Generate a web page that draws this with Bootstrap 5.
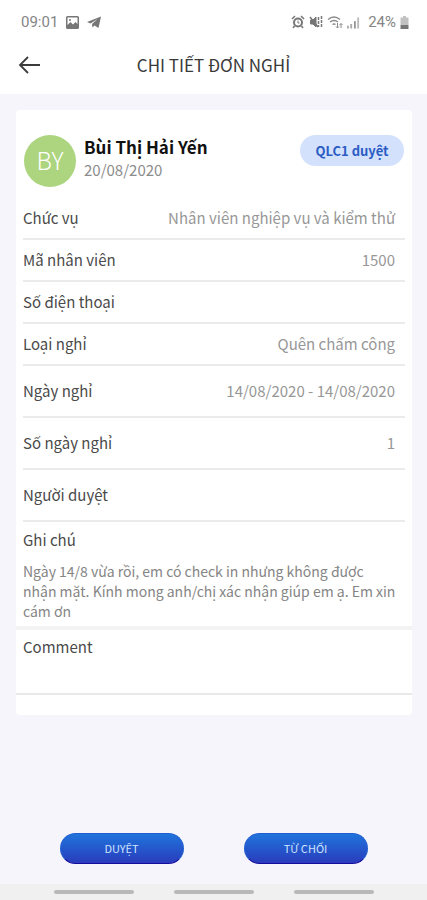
<!DOCTYPE html>
<html lang="vi">
<head>
<meta charset="utf-8">
<meta name="viewport" content="width=device-width, initial-scale=1">
<title>Chi tiết đơn nghỉ</title>
<link href="https://cdn.jsdelivr.net/npm/bootstrap@5.3.0/dist/css/bootstrap.min.css" rel="stylesheet">
<style>
body { font-family: "Noto Sans CJK SC", "Noto Sans", sans-serif; background: #f5f5fb; color: #4a4a4a; font-size: 15px; line-height: 20px; }
.status-bar { height: 42px; padding: 2px 18px 0 21px; color: #858585; font-family: Roboto, sans-serif; font-size: 15px; }
.title-bar { height: 52px; padding: 0 18px 6px; display: grid; grid-template-columns: 24px 1fr 24px; align-items: center; }
.title-bar h1 { font-size: 17px; line-height: 24px; color: #3a3a3a; }
.back-btn { width: 24px; height: 24px; line-height: 0; }
.sheet { margin: 16px 15px 0 16px; border-radius: 4px; padding-bottom: 20px; }
.person { padding: 25px 8px 10px; height: 88px; }
.initials { width: 52px; height: 52px; background: #add57f; font-size: 24px; font-weight: 300; padding-bottom: 2px; }
.person-name { font-size: 17px; line-height: 24px; color: #111; }
.person-date { font-size: 15px; line-height: 22px; color: #8c8c8c; }
.state-pill { width: 104px; height: 31px; background: #d3e1fc; color: #2a5cc4; font-size: 13px; }
.field { margin: 0 7px; height: 42px; border-bottom: 2px solid #ebebeb; padding-right: 10px; }
.field-tall { height: 52px; }
.field dt { font-weight: 400; }
.field dd { color: #979797; }
.note { margin: 0 7px; padding-top: 8px; height: 104px; }
.note p { font-size: 14px; line-height: 20px; color: #858585; margin-top: 11px; padding-right: 8px; }
.comment { border-top: 4px solid #f3f3f4; border-bottom: 2px solid #e9e9ea; padding: 7px 7px 0; height: 69px; }
.comment textarea { height: 32px; min-height: 0; resize: none; }
.action { width: 124px; height: 31px; font-size: 11px; color: #cfe4ff; background: linear-gradient(#1f74dc, #2a3cbc); border: 1px solid #1f5fd0; border-bottom-color: #160ca0; }
.action:hover { color: #fff; background: #2450c8; }
.actions { gap: 60px; padding-bottom: 20px; }
.sys-nav { height: 16px; gap: 40px; background: #f0f0f0; }
.sys-nav button { width: 80px; height: 4px; background: #b9b9b9; }
</style>
<script src="https://cdn.jsdelivr.net/npm/bootstrap@5.3.0/dist/js/bootstrap.bundle.min.js" defer></script>
</head>
<body class="d-flex flex-column min-vh-100">
<header class="bg-white">
  <div class="status-bar d-flex align-items-center justify-content-between">
    <div class="d-flex align-items-center gap-2">
      <span>09:01</span>
      <svg width="13" height="13" viewBox="0 0 13 13" aria-hidden="true"><path fill="#777" fill-rule="evenodd" d="M1.500 0h10A1.500 1.500 0 0 1 13 1.500v10a1.500 1.500 0 0 1-1.500 1.500h-10A1.500 1.500 0 0 1 0 11.500v-10A1.500 1.500 0 0 1 1.500 0zM1.500 1.500V9l3-3 2.500 2.500L9.500 6l2 2V1.500z"/><circle cx="4" cy="4" r="1" fill="#777"/></svg>
      <svg width="14" height="13" viewBox="0 0 14 13" aria-hidden="true"><path fill="#777" d="M14 .5 11.500 12 7.500 9.500 5.500 11.500 5 8 10.500 3 3.500 7.500 0 6z"/></svg>
    </div>
    <div class="d-flex align-items-center gap-1">
      <svg width="14" height="14" viewBox="0 0 14 14" fill="none" stroke="#777" aria-hidden="true"><circle cx="7" cy="7.500" r="4" stroke-width="2"/><path stroke-width="1.500" d="M1 4 4 1M10 1l3 3M3.500 11 2 13M10.500 11l1.500 2"/><path d="M7 5.500v2.500h1.500"/></svg>
      <svg width="14" height="14" viewBox="0 0 14 14" fill="none" stroke="#777" aria-hidden="true"><path fill="#777" d="M1.500 5H4l3-3v10L4 9H1.500z"/><path d="m1 2 8 10" stroke-width="1.500"/><path stroke-dasharray="3 1" stroke-width="1.500" d="M9.500 2v10M12.500 1v12"/></svg>
      <svg width="16" height="14" viewBox="0 0 16 14" fill="none" stroke="#8a8a8a" stroke-width="1.500" aria-hidden="true"><path d="M1 4.500Q7 -.5 13 4.500M3 7q4-3 8 0M5.500 9.500q1.500-1 3 0"/><path d="M10.500 8v5M9 11.500l1.500 1.500L12 11.500M14 13V8.500M12.500 10 14 8.500l1.500 1.500" stroke-width="1"/></svg>
      <svg width="13" height="13" viewBox="0 0 14 13" aria-hidden="true"><path fill="#aaa" d="M0 10h2v3H0zM3.500 8h2v5h-2z"/><path fill="#999" d="M7.500 5h2v8h-2z"/><path fill="#bbb" d="M11 1h2v12h-2z"/></svg>
      <span class="d-flex align-items-center ms-1">24%
      <svg class="ms-1" width="9" height="13" viewBox="0 0 9 13" aria-hidden="true"><path fill="#c2c2c2" d="M3 0h3v1.500h2.500V9h-8V1.500H3z"/><path fill="#777" d="M.5 9h8v4h-8z"/></svg></span>
    </div>
  </div>
  <div class="title-bar">
    <button type="button" class="back-btn btn p-0 border-0" aria-label="Quay lại"><svg width="24" height="24" viewBox="0 0 24 24" fill="none" stroke="#3c3c3c" stroke-width="1.800"><path d="M22 12H2M10 4 2 12l8 8"/></svg></button>
    <h1 class="m-0 text-center fw-normal">CHI TIẾT ĐƠN NGHỈ</h1>
  </div>
</header>

<main class="flex-grow-1 d-flex flex-column">
  <section class="sheet bg-white">
    <div class="person d-flex align-items-start">
      <div class="initials rounded-circle text-white d-flex align-items-center justify-content-center">BY</div>
      <div class="ms-2 flex-grow-1">
        <div class="person-name fw-bold">Bùi Thị Hải Yến</div>
        <div class="person-date">20/08/2020</div>
      </div>
      <span class="state-pill rounded-pill fw-bold d-flex align-items-center justify-content-center">QLC1 duyệt</span>
    </div>
    <dl class="m-0">
      <div class="field d-flex align-items-center justify-content-between"><dt>Chức vụ</dt><dd class="m-0">Nhân viên nghiệp vụ và kiểm thử</dd></div>
      <div class="field d-flex align-items-center justify-content-between"><dt>Mã nhân viên</dt><dd class="m-0">1500</dd></div>
      <div class="field d-flex align-items-center justify-content-between"><dt>Số điện thoại</dt><dd class="m-0"></dd></div>
      <div class="field d-flex align-items-center justify-content-between"><dt>Loại nghỉ</dt><dd class="m-0">Quên chấm công</dd></div>
      <div class="field field-tall d-flex align-items-center justify-content-between"><dt>Ngày nghỉ</dt><dd class="m-0">14/08/2020 - 14/08/2020</dd></div>
      <div class="field field-tall d-flex align-items-center justify-content-between"><dt>Số ngày nghỉ</dt><dd class="m-0">1</dd></div>
      <div class="field field-tall d-flex align-items-center justify-content-between"><dt>Người duyệt</dt><dd class="m-0"></dd></div>
    </dl>
    <div class="note">
      <div>Ghi chú</div>
      <p class="mb-0">Ngày 14/8 vừa rồi, em có check in nhưng không được nhận mặt. Kính mong anh/chị xác nhận giúp em ạ. Em xin cám ơn</p>
    </div>
    <div class="comment">
      <label for="comment" class="d-block">Comment</label>
      <textarea id="comment" class="form-control border-0 p-0 shadow-none"></textarea>
    </div>
  </section>
  <div class="actions d-flex justify-content-center mt-auto">
    <button type="button" class="action btn rounded-pill p-0">DUYỆT</button>
    <button type="button" class="action btn rounded-pill p-0">TỪ CHỐI</button>
  </div>
</main>
<nav class="sys-nav d-flex justify-content-center align-items-center" aria-label="Điều hướng hệ thống">
  <button type="button" class="border-0 p-0 rounded-pill" aria-label="Gần đây"></button>
  <button type="button" class="border-0 p-0 rounded-pill" aria-label="Màn hình chính"></button>
  <button type="button" class="border-0 p-0 rounded-pill" aria-label="Trở lại"></button>
</nav>
</body>
</html>
